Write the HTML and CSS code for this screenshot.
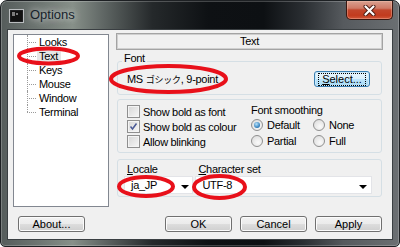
FILE: index.html
```html
<!DOCTYPE html>
<html>
<head>
  <title>Options</title>
  <link rel="stylesheet" href="styles.css">
</head>
<body>
  <div class="window">
    <div class="titlebar">
      <svg class="app-icon" width="15" height="14" viewBox="0 0 15 14">
        <rect x="0.5" y="0.5" width="14" height="13" fill="#2a2d30" stroke="#b9bcbe"/>
        <rect x="1.5" y="1.5" width="12" height="11" fill="#111"/>
        <path d="M3 4h3M3 6h3M7 5h2" stroke="#e8e8e8" stroke-width="1"/>
      </svg>
      <span class="title">Options</span>
      <div class="close">
        <svg width="13" height="11" viewBox="0 0 13 11">
          <path d="M2.5 1.5l8 8M10.5 1.5l-8 8" stroke="#4a1b12" stroke-width="4" stroke-linecap="round"/>
          <path d="M2.5 1.5l8 8M10.5 1.5l-8 8" stroke="#fff" stroke-width="2.2" stroke-linecap="round"/>
        </svg>
      </div>
    </div>

    <div class="client">
      <div class="main">
        <ul class="tree">
          <li><span>Looks</span></li>
          <li><span class="selected">Text</span></li>
          <li><span>Keys</span></li>
          <li><span>Mouse</span></li>
          <li><span>Window</span></li>
          <li><span>Terminal</span></li>
        </ul>

        <div class="panel">
          <div class="page-title">Text</div>

          <fieldset class="font-group">
            <legend>Font</legend>
            <div class="font-row">
              <span class="font-name">MS <span class="jp">ゴシック</span>, 9-point</span>
              <button class="btn btn-default"><span class="focus"><u>S</u>elect...</span></button>
            </div>
          </fieldset>

          <div class="group opts">
            <div class="checks">
              <label class="row"><span class="cb"></span>Show bold as font</label>
              <label class="row"><span class="cb checked"><svg width="11" height="11" viewBox="0 0 11 11"><path d="M2.5 5.5l2 2.5 4-5.5" fill="none" stroke="#4a5a96" stroke-width="1.5"/></svg></span>Show bold as colour</label>
              <label class="row"><span class="cb"></span>Allow blinking</label>
            </div>
            <div class="smoothing">
              <div class="smooth-label">Font smoothing</div>
              <div class="radios">
                <label class="row"><span class="rb on"></span>Default</label>
                <label class="row"><span class="rb"></span>None</label>
                <label class="row"><span class="rb"></span>Partial</label>
                <label class="row"><span class="rb"></span>Full</label>
              </div>
            </div>
          </div>

          <div class="group locale">
            <div class="locale-col">
              <div class="field-label"><u>L</u>ocale</div>
              <div class="combo"><span>ja_JP</span><span class="arrow"></span></div>
            </div>
            <div class="charset-col">
              <div class="field-label"><u>C</u>haracter set</div>
              <div class="combo"><span>UTF-8</span><span class="arrow"></span></div>
            </div>
          </div>
        </div>
      </div>

      <div class="buttons">
        <button class="btn">About...</button>
        <div class="spacer"></div>
        <button class="btn">OK</button>
        <button class="btn">Cancel</button>
        <button class="btn">Apply</button>
      </div>
    </div>

    <!-- red marks drawn over the screenshot -->
    <svg class="marks" width="400" height="247" viewBox="0 0 400 247">
      <g fill="none" stroke="#e8101a" stroke-width="4">
        <ellipse cx="48.5" cy="56" rx="29.5" ry="7.5"/>
        <ellipse cx="168.5" cy="79" rx="57.5" ry="13"/>
        <ellipse cx="146" cy="186.5" rx="27" ry="9.5"/>
        <ellipse cx="219.5" cy="187" rx="25.5" ry="11"/>
      </g>
    </svg>
  </div>
</body>
</html>
```

FILE: styles.css
```css
body {
  margin: 0;
  background: #fff;
  font-family: "Liberation Sans", "Noto Sans CJK JP", sans-serif;
  font-size: 11px;
  letter-spacing: -0.3px;
  color: #000;
}
.window {
  position: relative;
  width: 400px;
  height: 247px;
  box-sizing: border-box;
  display: flex;
  flex-direction: column;
  border: 1px solid #1d2023;
  border-radius: 7px 7px 5px 5px;
  background: linear-gradient(90deg, #555c5b 0%, #6f7773 10%, #879089 18%, #5e6563 26%, #25292b 38%, #0e1114 52%, #0d1013 66%, #2a2e32 76%, #565a5e 86%, #6b6f72 100%);
  box-shadow: inset 0 0 0 1px rgba(255, 255, 255, 0.22);
  overflow: hidden;
}
.titlebar {
  height: 28px;
  display: flex;
  align-items: flex-start;
  padding-left: 8px;
}
.app-icon {
  margin-top: 8px;
}
.title {
  margin: 7px 0 0 6px;
  font-size: 13px;
  line-height: 14px;
  letter-spacing: 0;
  color: #17222b;
  text-shadow: 0 0 6px rgba(255, 255, 255, 0.7), 0 0 10px rgba(255, 255, 255, 0.4);
}
.close {
  margin-left: auto;
  margin-right: 6px;
  width: 47px;
  height: 19px;
  box-sizing: border-box;
  border: 1px solid #3b1710;
  border-top: none;
  border-radius: 0 0 5px 5px;
  background: linear-gradient(#d9a090 0%, #cf7a66 40%, #c2462c 50%, #c23b1e 80%, #d0563a 100%);
  box-shadow: inset 0 0 0 1px rgba(255, 210, 190, 0.35);
  display: flex;
  align-items: center;
  justify-content: center;
}
.client {
  flex: 1;
  margin: 0 6px 6px;
  background: #f0f0f0;
  border: 1px solid #3a3f42;
  padding: 4px 9px 0 5px;
}
.main {
  display: flex;
  align-items: flex-start;
  gap: 7px;
}
.tree {
  list-style: none;
  margin: 0;
  padding: 0;
  width: 96px;
  height: 173px;
  box-sizing: border-box;
  border: 1px solid #828790;
  background: #fff;
}
.tree li {
  position: relative;
  height: 14px;
  line-height: 14px;
  padding-left: 23px;
}
.tree li::before {
  content: "";
  position: absolute;
  left: 13px;
  top: 7px;
  width: 9px;
  border-top: 1px dotted #9a9a9a;
}
.tree li::after {
  content: "";
  position: absolute;
  left: 13px;
  top: 0;
  bottom: 0;
  border-left: 1px dotted #9a9a9a;
}
.tree li:last-child::after {
  bottom: 7px;
}
.tree span {
  padding: 0 2px;
}
.tree .selected {
  display: inline-block;
  background: #e6e6e6;
  padding: 0 3px 0 2px;
}
.panel {
  width: 267px;
  margin-top: -1px;
  display: flex;
  flex-direction: column;
}
.page-title {
  height: 17px;
  box-sizing: border-box;
  border: 1px solid #a3a3a3;
  box-shadow: inset 0 0 0 1px #cfcfcf;
  text-align: center;
  line-height: 15px;
}
.font-group {
  margin: 2px 1px 0;
  padding: 1px 11px 7px 9px;
  border: 1px solid #d5dfe5;
  border-radius: 3px;
  min-width: 0;
}
.font-group legend {
  margin-left: -5px;
  padding: 0 2px 6px;
  line-height: 12px;
}
.font-row {
  display: flex;
  align-items: center;
  justify-content: space-between;
  height: 16px;
}
.font-name .jp {
  font-size: 9px;
  letter-spacing: -0.2px;
}
.group {
  margin: 4px 1px 0;
  border: 1px solid #d5dfe5;
  border-radius: 3px;
}
.opts {
  display: flex;
  padding: 4px 9px 3px;
}
.checks {
  width: 124px;
}
.row {
  display: flex;
  align-items: center;
  height: 15px;
  white-space: nowrap;
}
.cb {
  width: 13px;
  height: 13px;
  box-sizing: border-box;
  border: 1px solid #8f8f8f;
  background: linear-gradient(135deg, #d6d6d6, #f7f7f7);
  box-shadow: inset 0 0 0 1px #f4f4f4;
  margin-right: 3px;
  display: flex;
  align-items: center;
  justify-content: center;
}
.smooth-label {
  margin-top: -1px;
  line-height: 14px;
}
.radios {
  display: grid;
  grid-template-columns: 62px auto;
  row-gap: 1px;
}
.rb {
  width: 12px;
  height: 12px;
  box-sizing: border-box;
  border: 1px solid #8f8f8f;
  border-radius: 50%;
  background: radial-gradient(circle at 60% 65%, #fafafa, #d8d8d8);
  margin-right: 4px;
  display: flex;
  align-items: center;
  justify-content: center;
}
.rb.on::after {
  content: "";
  width: 6px;
  height: 6px;
  border-radius: 50%;
  background: radial-gradient(circle at 40% 35%, #b7e3fb, #2d7ab8 70%, #1c4e7c);
}
.locale {
  margin-top: 6px;
  display: flex;
  gap: 2px;
  padding: 3px 9px 2px 6px;
}
.locale-col {
  width: 70px;
}
.charset-col {
  width: 178px;
}
.field-label {
  line-height: 12px;
  padding-left: 3px;
}
.combo {
  margin-top: 1px;
  height: 18px;
  box-sizing: border-box;
  background: #fff;
  border: 1px solid #e3e4e8;
  display: flex;
  align-items: center;
  justify-content: space-between;
  padding: 0 3px 0 6px;
}
.charset-col .combo {
  padding-right: 4px;
}
.arrow {
  width: 0;
  height: 0;
  margin-top: 3px;
  border-left: 4px solid transparent;
  border-right: 4px solid transparent;
  border-top: 4px solid #000;
}
.buttons {
  display: flex;
  gap: 8px;
  margin: 9px 1px 0 5px;
}
.spacer {
  flex: 1;
}
.btn {
  width: 67px;
  height: 16px;
  box-sizing: border-box;
  padding: 0;
  border: 1px solid #707070;
  border-radius: 3px;
  background: linear-gradient(#f2f2f2 0%, #ebebeb 50%, #dddddd 51%, #cfcfcf 100%);
  box-shadow: inset 0 0 0 1px #fbfbfb;
  font: inherit;
  line-height: 13px;
  color: #000;
}
.btn-default {
  width: 56px;
  border-color: #3c7fb1;
  background: linear-gradient(#eaf6fd 0%, #d9f0fc 50%, #bee6fd 51%, #a7d9f5 100%);
  box-shadow: inset 0 0 0 1px #c9e8f9;
}
.focus {
  display: inline-block;
  outline: 1px dotted #000;
  padding: 0 3px;
  line-height: 11px;
}
.marks {
  position: absolute;
  top: -1px;
  left: -1px;
  pointer-events: none;
}
```
